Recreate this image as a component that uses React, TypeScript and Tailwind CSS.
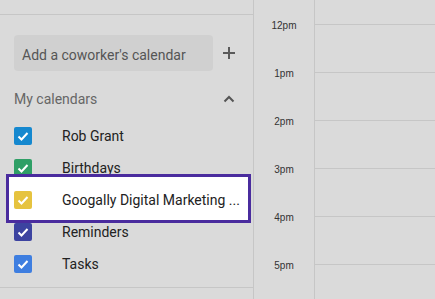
import React from 'react';

const calendars = [
  { name: 'Rob Grant', color: 'bg-[#1588cf]' },
  { name: 'Birthdays', color: 'bg-[#2f9f66]' },
  { name: 'Googally Digital Marketing ...', color: 'bg-[#e6c33f]', focused: true },
  { name: 'Reminders', color: 'bg-[#3c43a0]' },
  { name: 'Tasks', color: 'bg-[#3e7ee0]' },
];

const hours = ['12pm', '1pm', '2pm', '3pm', '4pm', '5pm'];

function Check() {
  return (
    <svg viewBox="0 0 18 18" width="18" height="18">
      <polyline points="4.5,9.5 7.5,12.5 13.5,6" fill="none" stroke="#fff" strokeWidth="2" />
    </svg>
  );
}

export default function App() {
  return (
    <div
      className="flex w-[435px] h-[299px] overflow-hidden bg-[#dadada]"
      style={{ fontFamily: 'Roboto, "Liberation Sans", sans-serif' }}
    >
      {/* Sidebar */}
      <div className="w-[254px] shrink-0 border-r border-[#c6c6c6]">
        <div className="h-[15px] border-b border-[#c6c6c6]" />

        <div className="flex items-center mt-5 pl-[14px]">
          <div className="w-[199px] h-9 rounded-sm bg-[#d0d0d0] flex items-center pl-2 pt-[5px] text-[14px] text-[#555]">
            Add a coworker's calendar
          </div>
          <svg viewBox="0 0 12 12" width="12" height="12" className="ml-[10px]">
            <path d="M6 0V12M0 6H12" stroke="#5a5a5a" strokeWidth="2" />
          </svg>
        </div>

        <div className="flex items-center justify-between h-[49px] pt-[7px] pl-[14px] pr-[18px]">
          <span className="text-[14px] text-[#666]">My calendars</span>
          <svg viewBox="0 0 12 8" width="12" height="8">
            <polyline points="1.5,6.5 6,2 10.5,6.5" fill="none" stroke="#555" strokeWidth="2" />
          </svg>
        </div>

        <div className="pb-[7px] border-b border-[#c6c6c6]">
          {calendars.map(c => (
            <div key={c.name} className="relative h-8 flex items-center pl-[14px]">
              {c.focused && (
                <div className="absolute left-[6px] right-[2px] -top-[10px] -bottom-[7px] bg-white border-[3px] border-[#4a2c9e]" />
              )}
              <div className={`relative w-[18px] h-[18px] rounded-[2px] ${c.color}`}>
                <Check />
              </div>
              <span className="relative ml-[30px] text-[14px] text-[#222]">{c.name}</span>
            </div>
          ))}
        </div>
      </div>

      {/* Time column */}
      <div
        className="w-[61px] shrink-0 border-r border-[#c6c6c6] pt-5"
        style={{ fontFamily: '"Liberation Sans", Arial, sans-serif' }}
      >
        {hours.map(h => (
          <div key={h} className="h-12 text-center text-[10px] leading-3 text-[#333]">
            {h}
          </div>
        ))}
      </div>

      {/* Day grid */}
      <div className="flex-1">
        <div className="h-[25px] border-b border-[#c6c6c6]" />
        {hours.map(h => (
          <div key={h} className="h-12 border-b border-[#c6c6c6]" />
        ))}
      </div>
    </div>
  );
}
